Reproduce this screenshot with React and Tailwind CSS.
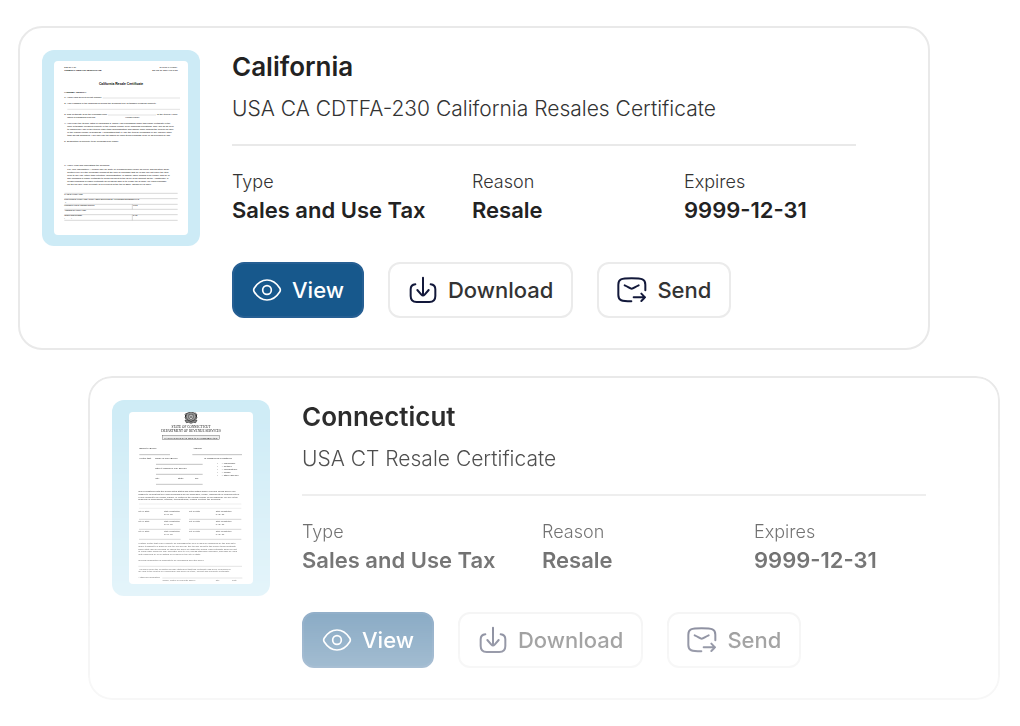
import React from 'react';

const EyeIcon = () => (
  <svg viewBox="0 0 90 90" className="size-[30px] shrink-0" fill="none" stroke="currentColor" strokeWidth="5" strokeLinecap="round" strokeLinejoin="round" aria-hidden="true">
    <path d="M7 39 C16 25 29 15 45 15 S74 25 83 39 Q87 45 83 51 C74 65 61 75 45 75 S16 65 7 51 Q3 45 7 39Z" />
    <circle cx="45" cy="45" r="13" />
  </svg>
);

const DownloadIcon = () => (
  <svg viewBox="0 0 90 90" className="size-[30px] shrink-0 text-[#12183a]" fill="none" stroke="currentColor" strokeWidth="6" strokeLinecap="round" strokeLinejoin="round" aria-hidden="true">
    <path d="M22 28 C12 29 8 34 8 43 V63 C8 76 14 81 26 81 H64 C76 81 82 76 82 63 V43 C82 34 78 29 68 28" />
    <path d="M45 8 V61 M28 45 L40 59 Q45 64 50 59 L62 45" />
  </svg>
);

const SendIcon = () => (
  <svg viewBox="0 0 90 90" className="size-[30px] shrink-0 text-[#12183a]" fill="none" stroke="currentColor" strokeWidth="6" strokeLinecap="round" strokeLinejoin="round" aria-hidden="true">
    <path d="M43 79 C14 79 4 77 4 60 V29 C4 12 12 10 44 10 S85 12 85 29 V46" />
    <path d="M23 31 C35 36 38 41 44 41 S53 36 65 31" />
    <path d="M50 67 H84 M73 56 L84 67 L73 78" />
  </svg>
);

const californiaTerms = [
  "4. I will resell the item(s) listed in paragraph 5, which I am purchasing under this resale certificate in the",
  "form of tangible personal property in the regular course of my business operations, and I will do so prior",
  "to making any use of the item(s) other than demonstration and display while holding the item(s) for sale",
  "in the regular course of business. I understand that if I use the item(s) purchased in any manner other",
  "than as just described, I will owe use tax based on each item's purchase price or as provided by law.",
];

const californiaNotice = [
  "For Your Information: A person may be guilty of a misdemeanor under Revenue and Taxation Code",
  "section 6094.5 if the purchaser knows at the time of purchase that he or she will not resell the item",
  "prior to any use (other than retention, demonstration, or display while holding it for resale) and he or",
  "she furnishes a resale certificate to avoid payment to the seller of an amount as tax. Additionally, a",
  "person misusing a resale certificate for personal gain or to evade tax is liable, for each purchase,",
  "for the tax due, plus a penalty of 10 percent of the tax or $500, whichever is more.",
];

const CaliforniaPaper = () => (
  <svg viewBox="0 0 402 522" className="h-[174px] w-[134px] rounded bg-white" fill="#000" fontFamily="Liberation Sans, sans-serif" fontSize="7" role="img" aria-label="California resale certificate preview">
    <text x="31" y="22" fontSize="5">BOE-230 (7-02)</text>
    <text x="31" y="30" fontSize="7" fontWeight="bold">GENERAL RESALE CERTIFICATE</text>
    <text x="371" y="22" fontSize="5" textAnchor="end">STATE OF CALIFORNIA</text>
    <text x="371" y="30" fontSize="6" textAnchor="end">BOARD OF EQUALIZATION</text>
    <text x="201" y="73" fontSize="10" fontWeight="bold" textAnchor="middle">California Resale Certificate</text>
    <text x="31" y="95" fontWeight="bold">I HEREBY CERTIFY:</text>
    <text x="31" y="111">1. I hold valid seller's permit number</text>
    <text x="31" y="128">2. I am engaged in the business of selling the following type of tangible personal property.</text>
    <text x="31" y="161">3. This certificate is for the purchase from</text>
    <text x="371" y="161" textAnchor="end">of the item(s) I have</text>
    <text x="40" y="170">listed in paragraph 5 below.</text>
    <text x="235" y="170" fontSize="6" textAnchor="middle">[Vendor's name]</text>
    <path d="M146 111 H378 M40 145 H378 M162 162 H306" stroke="#aaa" />
    {californiaTerms.map((line, i) => (
      <text key={line} x={i === 0 ? 31 : 40} y={188 + i * 9}>{line}</text>
    ))}
    <text x="31" y="243">5. Description of property to be purchased for resale:</text>
    <text x="31" y="314">6. I have read and understand the following:</text>
    {californiaNotice.map((line, i) => (
      <text key={line} x="40" y={328 + i * 9}>{line}</text>
    ))}
    <g fontSize="5">
      <text x="31" y="403">NAME OF PURCHASER</text>
      <text x="31" y="418">SIGNATURE OF PURCHASER, PURCHASER'S EMPLOYEE OR AUTHORIZED REPRESENTATIVE</text>
      <text x="33" y="427">X</text>
      <text x="31" y="435">PRINTED NAME OF PERSON SIGNING</text>
      <text x="237" y="435">TITLE</text>
      <text x="31" y="451">ADDRESS OF PURCHASER</text>
      <text x="31" y="466">TELEPHONE NUMBER</text>
      <text x="237" y="466">DATE</text>
      <text x="31" y="475">(</text>
      <text x="52" y="475">)</text>
    </g>
    <path d="M31 397 H371 M31 413 H371 M31 430 H371 M31 445 H371 M31 461 H371 M31 478 H371 M235 430 V445 M235 461 V478" stroke="#888" fill="none" />
  </svg>
);

const connecticutIntro = [
  "and is registered with the below listed states and cities within which your firm would deliver pur-",
  "chases to us and that any such purchases are for wholesale, resale, ingredients or components of",
  "a new product to be resold, leased, or rented in the normal course of our business. We are in the",
  "business of wholesaling, retailing, manufacturing, leasing (renting) the following:",
];

const connecticutTerms = [
  "I further certify that if any property so purchased tax free is used or consumed by the firm as to",
  "make it subject to a sales or use tax we will pay the tax due direct to the proper taxing authority",
  "when state law so provides or inform the seller for added tax billing. This certificate shall be part",
  "of each order which we may hereafter give to you, unless otherwise specified, and shall be valid",
  "until cancelled by us in writing or revoked by the city or state.",
];

const connecticutOptions = ["Wholesaler", "Retailer", "Manufacturer", "Lessor", "Other (specify)"];

const ConnecticutPaper = () => (
  <svg viewBox="0 0 372 516" className="h-[172px] w-[124px] rounded bg-white" fill="#000" fontFamily="Liberation Sans, sans-serif" fontSize="7" role="img" aria-label="Connecticut resale certificate preview">
    {/* State crest */}
    <g stroke="#222" strokeWidth="2" fill="none">
      <path d="M174 4 Q186 -5 198 4 Q206 15 196 24 Q186 32 176 24 Q166 15 174 4Z" fill="#999" />
      <path d="M180 7 H192 V19 Q186 26 180 19Z" fill="#eee" />
      <path d="M173 3 Q166 7 170 12 Q165 18 173 22 M199 3 Q206 7 202 12 Q207 18 199 22" strokeWidth="3" />
      <path d="M168 24 Q177 24 186 29 Q195 24 204 24 L200 32 Q193 29 186 34 Q179 29 172 32Z" fill="#888" />
      <path d="M183 10 L189 18 M189 10 L183 18" />
    </g>
    <g fontFamily="Liberation Serif, serif" textAnchor="middle" fontSize="10">
      <text x="186" y="48">STATE OF CONNECTICUT</text>
      <text x="186" y="60">DEPARTMENT OF REVENUE SERVICES</text>
      <rect x="101" y="70" width="170" height="13" fill="#eee" stroke="#222" />
      <text x="186" y="80" fontSize="8" fontWeight="bold">SALES &amp; USE TAX RESALE CERTIFICATE</text>
    </g>
    <text x="30" y="111">Issued to (Seller)</text>
    <text x="192" y="111">Address</text>
    <text x="30" y="141">I certify that</text>
    <text x="79" y="141">Name of Firm (Buyer)</text>
    <text x="226" y="141">is engaged as a registered</text>
    <text x="79" y="171">Street Address or P.O. Box No.</text>
    <text x="79" y="200">City</text>
    <text x="147" y="200">State</text>
    <text x="198" y="200">Zip</text>
    {connecticutOptions.map((option, i) => (
      <g key={option}>
        <text x="264" y={155 + i * 9}>(</text>
        <text x="278" y={155 + i * 9}>)</text>
        <text x="284" y={155 + i * 9}>{option}</text>
      </g>
    ))}
    <path d="M31 128 H123 M190 128 H339 M81 157 H221 M81 187 H221 M81 217 H221" stroke="#222" />
    {connecticutIntro.map((line, i) => (
      <text key={line} x="28" y={241 + i * 8}>{line}</text>
    ))}
    <path d="M30 276 H337 M30 289 H337" stroke="#bbb" />
    {[301, 330, 361].map((y) => (
      <g key={y} fontSize="6">
        <text x="28" y={y}>City or State</text>
        <text x="105" y={y}>State Registration</text>
        <text x="105" y={y + 8}>or I.D. No.</text>
        <text x="180" y={y}>City or State</text>
        <text x="260" y={y}>State Registration</text>
        <text x="260" y={y + 8}>or I.D. No.</text>
      </g>
    ))}
    <path d="M30 322 H155 M180 322 H337 M30 352 H155 M180 352 H337 M30 382 H155 M180 382 H337" stroke="#555" />
    {connecticutTerms.map((line, i) => (
      <text key={line} x="28" y={397 + i * 8}>{line}</text>
    ))}
    <text x="28" y="448">General description of products to be purchased from the seller:</text>
    <path d="M28 463 H339 M100 498 H340" stroke="#777" />
    <text x="30" y="473">I declare under the penalties of false statement that this certificate has been examined by</text>
    <text x="28" y="481">me and to the best of my knowledge and belief is a true, correct and complete certificate.</text>
    <text x="28" y="498">Authorized Signature</text>
    <g fontSize="6">
      <text x="100" y="507">(Owner, Partner or Corporate Officer)</text>
      <text x="260" y="507">Title</text>
      <text x="310" y="507">Date</text>
    </g>
  </svg>
);

const Detail = ({ label, value }) => (
  <div>
    <dt className="text-[18px] leading-6 font-light text-[#333]">{label}</dt>
    <dd className="text-[22px] leading-8 font-semibold text-[#222]">{value}</dd>
  </div>
);

const outlineButton = "flex h-14 items-center gap-[10px] rounded-xl border-2 border-[#ebebeb] bg-white px-[18px] text-[22px] font-medium text-[#333]";

const CertificateCard = ({ state, title, type, reason, expires, preview, className = "" }) => (
  <article className={`flex items-start gap-8 rounded-3xl border-2 border-[#e9e9e9] bg-white pt-[22px] pr-[72px] pb-[30px] pl-[22px] ${className}`}>
    <div className="flex h-[196px] w-[158px] shrink-0 items-center justify-center rounded-xl bg-[#cdebf6]">
      {preview}
    </div>
    <div className="min-w-0 flex-1">
      <h2 className="text-[26px] leading-[34px] font-semibold text-[#222]">{state}</h2>
      <p className="mt-2 text-[21px] leading-[34px] font-light text-[#333]">{title}</p>
      <hr className="mt-[18px] border-t-2 border-[#e9e9e9]" />
      <dl className="mt-6 grid grid-cols-[240fr_212fr_172fr]">
        <Detail label="Type" value={type} />
        <Detail label="Reason" value={reason} />
        <Detail label="Expires" value={expires} />
      </dl>
      <div className="mt-9 flex gap-6">
        <button type="button" className="flex h-14 items-center gap-[10px] rounded-xl border-2 border-[#265f93] bg-[#17588c] px-[18px] text-[22px] font-medium text-white">
          <EyeIcon />
          View
        </button>
        <button type="button" className={outlineButton}>
          <DownloadIcon />
          Download
        </button>
        <button type="button" className={outlineButton}>
          <SendIcon />
          Send
        </button>
      </div>
    </div>
  </article>
);

const App = () => {
  return (
    <main className="flex flex-col gap-[26px] bg-white pt-[26px] pr-5 pb-[26px] pl-[18px] font-[Inter,sans-serif]">
      <CertificateCard
        state="California"
        title="USA CA CDTFA-230 California Resales Certificate"
        type="Sales and Use Tax"
        reason="Resale"
        expires="9999-12-31"
        preview={<CaliforniaPaper />}
        className="mr-[70px]"
      />
      {/* Fades out towards the bottom */}
      <CertificateCard
        state="Connecticut"
        title="USA CT Resale Certificate"
        type="Sales and Use Tax"
        reason="Resale"
        expires="9999-12-31"
        preview={<ConnecticutPaper />}
        className="ml-[70px] mask-[linear-gradient(to_bottom,#000_0%,rgba(0,0,0,0.95)_14%,rgba(0,0,0,0.5)_73%,rgba(0,0,0,0.34)_100%)]"
      />
    </main>
  );
};

export default App;
